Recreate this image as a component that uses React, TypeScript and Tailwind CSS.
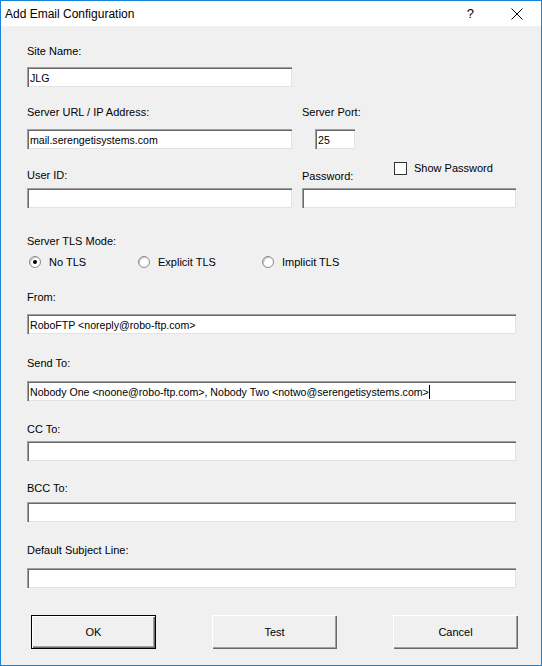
const font = "font-['Liberation_Sans',Arial,sans-serif]";

const boxCls =
  "h-[20px] bg-white border-t border-l border-[#a0a0a0] border-b-white border-r-white shadow-[inset_1px_1px_0_#696969,inset_-1px_-1px_0_#e3e3e3] flex items-center pl-[2px] text-[10.6px] leading-[14px] text-black whitespace-nowrap overflow-hidden";

const TextBox = ({ value, width, cursor }: { value?: string; width: string; cursor?: boolean }) => (
  <div className={`${boxCls} ${width}`}>
    {value}
    {cursor && <span className="inline-block w-px h-[14px] bg-black" />}
  </div>
);

const Label = ({ text, className = "" }: { text: string; className?: string }) => (
  <div className={`h-[14px] leading-[14px] text-[11px] text-black ${className}`}>{text}</div>
);

const Radio = ({ label, checked }: { label: string; checked?: boolean }) => (
  <div className="flex items-center h-[14px]">
    <span className="w-[12px] h-[12px] rounded-full bg-white border border-[#8a8a8a] shadow-[inset_1px_1px_0_#c8c8c8] flex items-center justify-center">
      {checked && <span className="w-[4px] h-[4px] rounded-full bg-black" />}
    </span>
    <span className="ml-[8px] text-[11px] leading-[14px]">{label}</span>
  </div>
);

const Button = ({ text, primary }: { text: string; primary?: boolean }) => (
  <div
    className={`w-[125px] h-[34px] bg-[#f0f0f0] flex items-center justify-center text-[11px] ${
      primary
        ? "border border-black shadow-[inset_1px_1px_0_#ffffff,inset_-1px_-1px_0_#696969,inset_-2px_-2px_0_#a0a0a0]"
        : "shadow-[inset_1px_1px_0_#ffffff,inset_-1px_-1px_0_#696969,inset_-2px_-2px_0_#a0a0a0]"
    }`}
  >
    {text}
  </div>
);

export default function App() {
  return (
    <div className={`w-[542px] h-[666px] border border-[#1883d7] flex flex-col ${font} text-black`}>
      {/* title bar */}
      <div className="h-[25px] bg-white flex items-center shrink-0">
        <span className="ml-[4px] text-[12px] leading-[14px] mt-[1px]">Add Email Configuration</span>
        <span className="ml-auto text-[13px] mr-[37px] mt-[1px]">?</span>
        <svg width="12" height="12" viewBox="0 0 12 12" className="mr-[18px] mt-[1px]">
          <path d="M0.5 0.5 L11.5 11.5 M11.5 0.5 L0.5 11.5" stroke="#000" strokeWidth="1" />
        </svg>
      </div>

      <div className="flex-1 bg-[#f0f0f0] pl-[26px] flex flex-col">
        <Label text="Site Name:" className="mt-[18px]" />
        <div className="mt-[9px]">
          <TextBox value="JLG" width="w-[265px]" />
        </div>

        <div className="flex mt-[18px]">
          <div className="w-[275px]">
            <Label text="Server URL / IP Address:" />
            <div className="mt-[10px]">
              <TextBox value="mail.serengetisystems.com" width="w-[265px]" />
            </div>
          </div>
          <div>
            <Label text="Server Port:" />
            <div className="mt-[10px] ml-[13px]">
              <TextBox value="25" width="w-[40px]" />
            </div>
          </div>
        </div>

        <div className="flex mt-[17px]">
          <div className="w-[275px]">
            <Label text="User ID:" className="mt-[2px]" />
            <div className="mt-[6px]">
              <TextBox width="w-[265px]" />
            </div>
          </div>
          <div className="relative">
            <div className="absolute left-[92px] top-[-5px] flex items-center">
              <span className="w-[13px] h-[13px] bg-white border border-[#333333]" />
              <span className="ml-[7px] text-[11px] leading-[14px]">Show Password</span>
            </div>
            <Label text="Password:" className="mt-[3px]" />
            <div className="mt-[5px]">
              <TextBox width="w-[214px]" />
            </div>
          </div>
        </div>

        <Label text="Server TLS Mode:" className="mt-[26px]" />
        <div className="flex mt-[7px] ml-[2px]">
          <div className="w-[109px]">
            <Radio label="No TLS" checked />
          </div>
          <div className="w-[124px]">
            <Radio label="Explicit TLS" />
          </div>
          <Radio label="Implicit TLS" />
        </div>

        <Label text="From:" className="mt-[21px]" />
        <div className="mt-[10px]">
          <TextBox value="RoboFTP <noreply@robo-ftp.com>" width="w-[489px]" />
        </div>

        <Label text="Send To:" className="mt-[22px]" />
        <div className="mt-[11px]">
          <TextBox
            value="Nobody One <noone@robo-ftp.com>, Nobody Two <notwo@serengetisystems.com>"
            width="w-[489px]"
            cursor
          />
        </div>

        <Label text="CC To:" className="mt-[21px]" />
        <div className="mt-[5px]">
          <TextBox width="w-[489px]" />
        </div>

        <Label text="BCC To:" className="mt-[20px]" />
        <div className="mt-[7px]">
          <TextBox width="w-[489px]" />
        </div>

        <Label text="Default Subject Line:" className="mt-[21px]" />
        <div className="mt-[11px]">
          <TextBox width="w-[489px]" />
        </div>

        <div className="flex mt-[27px] ml-[4px] gap-[56px]">
          <Button text="OK" primary />
          <Button text="Test" />
          <Button text="Cancel" />
        </div>
      </div>
    </div>
  );
}
